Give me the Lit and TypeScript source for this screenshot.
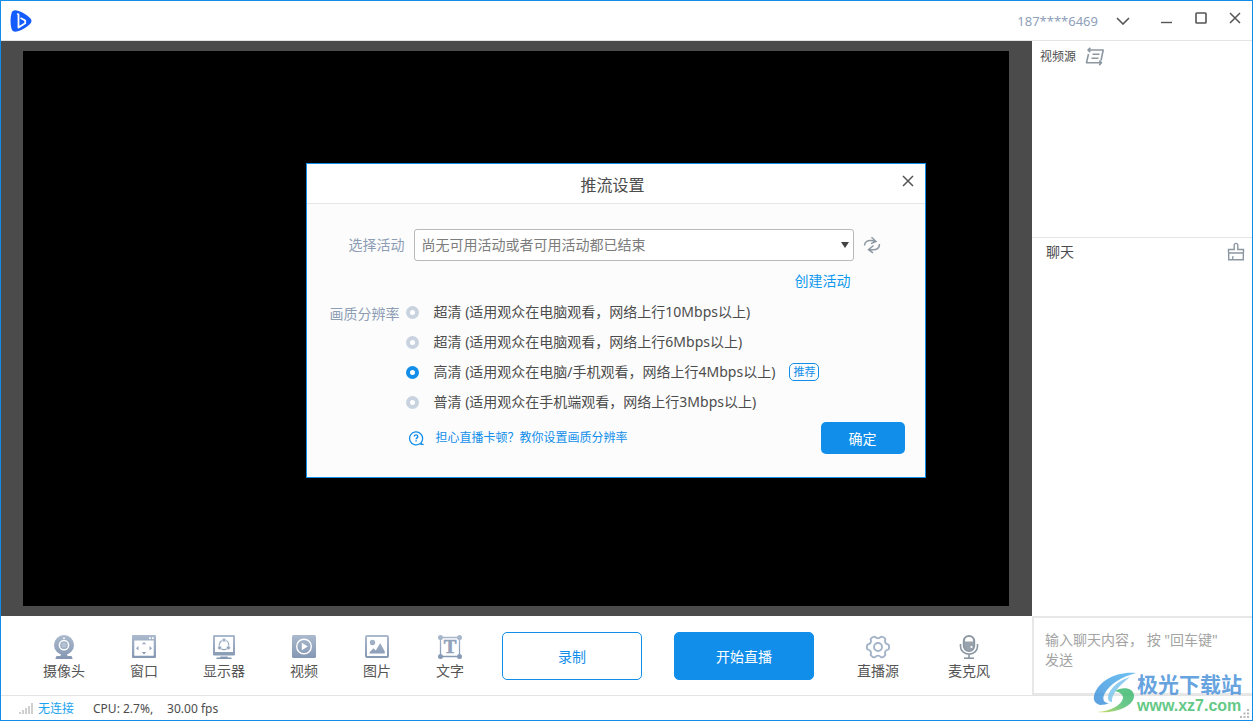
import { LitElement, html, css, svg } from "lit";
import { customElement, state } from "lit/decorators.js";

const steel = svg`<defs><linearGradient id="steel" x1="0" y1="0" x2="0" y2="24" gradientUnits="userSpaceOnUse">
  <stop offset="0" stop-color="#abbacd"/><stop offset="1" stop-color="#8396b2"/></linearGradient></defs>`;

/** Outline of a six-lobed gear, centred on 12,12. */
function gearPath(): string {
  const at = (deg: number, r: number) => {
    const a = (deg * Math.PI) / 180;
    return `${(12 + r * Math.cos(a)).toFixed(2)} ${(12 + r * Math.sin(a)).toFixed(2)}`;
  };
  let d = `M${at(-13, 10.8)}`;
  for (let a = 0; a < 360; a += 60) {
    d += `Q${at(a, 11.8)} ${at(a + 13, 10.8)}Q${at(a + 30, 6.9)} ${at(a + 47, 10.8)}`;
  }
  return d + "Z";
}

const icons: Record<string, unknown> = {
  camera: svg`${steel}
    <circle cx="12" cy="10" r="10" fill="url(#steel)"/>
    <path d="M9 19h6l.6 2H19.500l1.200 3H3.300l1.200-3H8.400z" fill="url(#steel)"/>
    <circle cx="12" cy="10.200" r="4.600" fill="none" stroke="#fff" stroke-width="1.500"/>
    <circle cx="12" cy="10.200" r="2.600" fill="#b4c1d2"/>
    <circle cx="12" cy="3.200" r=".9" fill="#fff"/>`,
  window: svg`${steel}
    <path fill="url(#steel)" fill-rule="evenodd" d="M1 0h22a1 1 0 0 1 1 1v21a1 1 0 0 1-1 1H1a1 1 0 0 1-1-1V1a1 1 0 0 1 1-1zM2.300 5.500v15.200h19.400V5.500z"/>
    <path fill="#fff" d="M17 2.200h1.700v1.700H17zM20 2.200h1.700v1.700H20z"/>
    <path fill="url(#steel)" d="M12 7l2.300 2.300H9.700zM12 19.400l2.300-2.300H9.700zM4 13.200l2.500-2.300v4.600zM20 13.200l-2.500-2.300v4.600z"/>`,
  monitor: svg`${steel}
    <path fill="url(#steel)" fill-rule="evenodd" d="M2 0h20a1 1 0 0 1 1 1v18.500a1 1 0 0 1-1 1H2a1 1 0 0 1-1-1V1a1 1 0 0 1 1-1zM3 2v15h18V2z"/>
    <path fill="url(#steel)" d="M8.500 21.500h7l.5 1h3.500V24h-15v-1.500H8z"/>
    <circle cx="12" cy="9.900" r="4.700" fill="none" stroke="url(#steel)" stroke-width="1.300"/>
    <g fill="url(#steel)" stroke="#fff" stroke-width=".6"><circle cx="12" cy="5" r="2"/><circle cx="7.600" cy="12.800" r="2"/><circle cx="16.400" cy="12.800" r="2"/></g>`,
  video: svg`${steel}
    <rect width="24" height="23" rx="1.500" fill="url(#steel)"/>
    <circle cx="12" cy="11.500" r="7.300" fill="none" stroke="#fff" stroke-width="1.400"/>
    <path fill="#fff" d="M9.800 7.700l6 3.800-6 3.800z"/>`,
  picture: svg`${steel}
    <rect x="1" y="1" width="22" height="21" rx="1" fill="none" stroke="url(#steel)" stroke-width="2"/>
    <circle cx="7.500" cy="7.500" r="2.700" fill="url(#steel)"/>
    <path fill="url(#steel)" d="M4.500 18.500v-1.200l4-4 2.300 2.200L15.200 8l4.600 8.500v2z"/>`,
  text: svg`${steel}
    <path d="M2.500 2.500h19v19h-19z" fill="none" stroke="url(#steel)" stroke-width="1.300"/>
    <g fill="url(#steel)"><circle cx="2.500" cy="2.500" r="2.500"/><circle cx="21.500" cy="2.500" r="2.500"/><circle cx="2.500" cy="21.500" r="2.500"/><circle cx="21.500" cy="21.500" r="2.500"/></g>
    <text x="12" y="18" text-anchor="middle" font-family="Liberation Serif, serif" font-weight="700" font-size="19" fill="#91a2bb" stroke="#91a2bb" stroke-width=".6">T</text>`,
  gear: svg`<path d="${gearPath()}" fill="none" stroke="#a3b3c8" stroke-width="1.900" stroke-linejoin="round"/>
    <circle cx="12" cy="12" r="4" fill="none" stroke="#a3b3c8" stroke-width="1.900"/>`,
  mic: svg`<rect x="6.500" y=".7" width="11" height="15.600" rx="5.500" fill="#98a2ad" stroke="#8b96a3" stroke-width="1.400"/>
    <path fill="#fff" d="M8 6.500V6a4 4 0 0 1 8 0v.5z"/><circle cx="14.500" cy="12" r="1.100" fill="#fff"/>
    <path d="M3.500 9v2.500a8.500 7.600 0 0 0 17 0V9M12 19v4" fill="none" stroke="#8b96a3" stroke-width="1.600"/>
    <path d="M7 23.200h10" stroke="#8b96a3" stroke-width="1.600"/>`,
};

const icon = (name: string) => html`<svg width="24" height="24" viewBox="0 0 24 24" aria-hidden="true">${icons[name]}</svg>`;

const sources = [
  { icon: "camera", label: "摄像头" },
  { icon: "window", label: "窗口" },
  { icon: "monitor", label: "显示器" },
  { icon: "video", label: "视频" },
  { icon: "picture", label: "图片" },
  { icon: "text", label: "文字" },
];

const inputs = [
  { icon: "gear", label: "直播源" },
  { icon: "mic", label: "麦克风" },
];

const qualities = [
  { id: "q10", label: "超清 (适用观众在电脑观看，网络上行10Mbps以上)", recommended: false },
  { id: "q6", label: "超清 (适用观众在电脑观看，网络上行6Mbps以上)", recommended: false },
  { id: "q4", label: "高清 (适用观众在电脑/手机观看，网络上行4Mbps以上)", recommended: true },
  { id: "q3", label: "普清 (适用观众在手机端观看，网络上行3Mbps以上)", recommended: false },
];

const base = css`
  * { box-sizing: border-box; }
  button { font: inherit; color: inherit; border: 0; padding: 0; background: none; cursor: pointer; }
  a { text-decoration: none; }
  svg { display: block; }
`;

@customElement("stream-settings")
export class StreamSettings extends LitElement {
  @state() private quality = "q4";

  static styles = [base, css`
    :host { display: block; background: #fcfcfc; border: 1px solid #118eea; color: #4c4c4c; font-size: 14px; line-height: 20px; }
    .head { position: relative; background: #fff; border-bottom: 1px solid #e4e6e8; height: 40px; display: grid; place-items: center; padding: 2px 6px 0 0; }
    h2 { margin: 0; font-size: 16px; line-height: 24px; font-weight: 400; color: #4c4c4c; }
    .close { position: absolute; right: 11px; top: 11px; color: #555; }
    form { padding: 25px 20px 23px 0; }
    .row { display: flex; align-items: center; gap: 9px; padding-left: 42px; }
    .caption { color: #8d9db4; white-space: nowrap; }
    .picker { position: relative; flex: 1; max-width: 440px; }
    select { appearance: none; width: 100%; height: 32px; display: block; padding: 0 24px 0 7px; border: 1px solid #b9b9b9; border-radius: 3px; background: #fff; color: #7c7c7c; font: inherit; }
    .caret { position: absolute; right: 4px; top: 12px; pointer-events: none; }
    .create { display: flex; justify-content: flex-end; margin-top: 10px; padding-right: 54px; }
    .create a { color: #0d99ee; }
    .quality { display: flex; gap: 6px; padding: 6px 0 0 23px; margin: 0; }
    .quality .caption { line-height: 34px; }
    .options { flex: 1; }
    .option { display: flex; align-items: center; height: 30px; }
    .option label { padding-left: 15px; }
    input { appearance: none; margin: 0; width: 13px; height: 13px; border-radius: 50%; border: 4px solid #c9d3df; background: #fff; }
    input:checked { border-color: #118eea; }
    .badge { margin-left: 14px; border: 1px solid #118eea; border-radius: 5px; color: #118eea; font-size: 11px; line-height: 16px; padding: 0 3px; }
    .foot { display: flex; justify-content: space-between; align-items: center; margin-top: 5px; padding-left: 101px; }
    .help { display: flex; align-items: center; gap: 12px; color: #118eea; font-size: 12px; }
    .ok { width: 84px; height: 32px; padding-top: 2px; border-radius: 5px; background: #118eea; color: #fff; }
  `];

  render() {
    return html`
      <div class="head">
        <h2>推流设置</h2>
        <button class="close" aria-label="关闭"><svg width="12" height="12" viewBox="0 0 12 12"><path d="M1 1l10 10M11 1L1 11" stroke="currentColor" stroke-width="1.500"/></svg></button>
      </div>
      <form @submit=${(e: Event) => e.preventDefault()}>
        <div class="row">
          <label class="caption" for="activity">选择活动</label>
          <div class="picker">
            <select id="activity"><option>尚无可用活动或者可用活动都已结束</option></select>
            <svg class="caret" width="10" height="8" viewBox="0 0 10 8"><path d="M1 1h8L5 7z" fill="#444"/></svg>
          </div>
          <button type="button" aria-label="刷新"><svg width="18" height="18" viewBox="0 0 18 18" fill="none" stroke="#8e98a3" stroke-width="1.500">
            <path d="M1.500 9.500C1.500 5.500 5 4 8.500 4.500L13 5.500M8.500 1.200l4.500 4.200-5 2.200"/>
            <path d="M16.500 8c0 4-3 5.800-6.500 5.800H5.500M10.500 9.500l-5 4.200 4.500 3.200"/></svg></button>
        </div>
        <div class="create"><a href="#">创建活动</a></div>
        <div class="quality" role="radiogroup" aria-labelledby="quality-caption">
          <span class="caption" id="quality-caption">画质分辨率</span>
          <div class="options">
            ${qualities.map((q) => html`<div class="option">
              <input type="radio" name="quality" id=${q.id} .checked=${this.quality === q.id} @change=${() => (this.quality = q.id)}>
              <label for=${q.id}>${q.label}</label>
              ${q.recommended ? html`<span class="badge">推荐</span>` : ""}
            </div>`)}
          </div>
        </div>
        <div class="foot">
          <a class="help" href="#"><svg width="16" height="16" viewBox="0 0 16 16" fill="none" stroke="#118eea" stroke-width="1.300">
            <path d="M12 13.600A6.500 6.500 0 1 1 14.500 9.500c-.2 1.500-.9 2.600-1.500 3.200 0 .9.600 1.400 1.400 1.600-1 .3-1.800 0-2.400-.7"/>
            <path d="M6.300 6.500c0-2.200 3.500-2.200 3.500 0 0 1.300-1.700 1.400-1.700 2.800M8.100 10.300v1.300" stroke-width="1.400"/></svg>担心直播卡顿？教你设置画质分辨率</a>
          <button class="ok">确定</button>
        </div>
      </form>`;
  }
}

@customElement("app-root")
export class AppRoot extends LitElement {
  static styles = [base, css`
    :host {
      position: relative; display: grid; height: 100vh; box-sizing: border-box; overflow: hidden;
      grid-template: auto minmax(0, 1fr) auto auto / minmax(0, 1fr) 220px;
      grid-template-areas: "title title" "stage side" "tools chat" "status status";
      border: 1px solid #118eea; background: #fff; color: #4c4c4c;
      font: 14px/20px "Noto Sans", "Noto Sans CJK SC", sans-serif;
    }
    header { grid-area: title; display: flex; align-items: center; height: 40px; padding-left: 9px; border-bottom: 1px solid #e4e4e4; }
    .account { margin-left: auto; display: flex; align-items: center; color: #8ea0ba; font-size: 13px; }
    .account button { width: 24px; height: 24px; display: grid; place-items: center; margin-left: 13px; color: #555; }
    .controls { display: flex; align-self: stretch; margin-left: 15px; color: #555; }
    .controls button { width: 34px; height: 34px; display: grid; place-items: center; }
    .stage { grid-area: stage; background: #4b4b4b; padding: 10px 23px 10px 22px; display: grid; }
    .preview { background: #000; }
    aside { grid-area: side; display: grid; grid-template-rows: 197px 1fr; }
    .panel { display: flex; align-items: flex-start; }
    .panel h3 { margin: 0; font-weight: 400; }
    .feeds { padding: 6px 8px; gap: 9px; border-bottom: 1px solid #e4e4e4; }
    .feeds h3 { font-size: 12px; }
    .talk { padding: 4px 7px 0 14px; justify-content: space-between; }
    .talk h3 { font-size: 14px; }
    .tools { grid-area: tools; display: flex; align-items: center; height: 79px; padding-left: 42px; }
    .group { display: flex; }
    .sources { gap: 45px; }
    .actions { gap: 32px; margin: 0 43px 0 38px; }
    .inputs { gap: 49px; }
    .tool { display: grid; justify-items: center; gap: 2px; padding-top: 4px; white-space: nowrap; color: #555; }
    .action { width: 140px; height: 48px; padding-top: 2px; border-radius: 5px; border: 1px solid #118eea; color: #118eea; }
    .primary { background: #118eea; color: #fff; }
    .chat { grid-area: chat; display: grid; }
    textarea { width: 100%; height: 79px; resize: none; border: solid #e7e7e7; border-width: 2px 0 2px 2px; padding: 12px 20px 0 11px; font: inherit; color: #444; background: #fff; outline: 0; overflow: hidden; }
    textarea::placeholder { color: #a3a3a3; opacity: 1; }
    footer { grid-area: status; display: flex; align-items: center; height: 25px; padding: 1px 3px 0 18px; border-top: 1px solid #e4e4e4; font-size: 12px; }
    .link { color: #1aa3ee; margin: 0 19px 0 4px; }
    .fps { margin-left: 14px; }
    .grip { margin-left: auto; align-self: flex-end; margin-bottom: 2px; }
    .dialog { position: absolute; left: calc(50% - 321px); top: 162px; width: 620px; }
    .mark { position: absolute; right: 10px; bottom: 6px; display: flex; align-items: center; pointer-events: none; opacity: 0.85; }
    .mark-name { font-size: 21px; line-height: 26px; font-weight: 700; color: #4d93da; }
    .mark-site { font: 700 16px/17px "Liberation Sans", sans-serif; color: #4abf72; }
  `];

  private tool(t: { icon: string; label: string }) {
    return html`<button class="tool">${icon(t.icon)}<span>${t.label}</span></button>`;
  }

  render() {
    return html`
      <header>
        <svg width="22" height="22" viewBox="0 0 22 22" aria-hidden="true">
          <path fill="#155cff" d="M1.500 3.200C2.300.2 4.800-.3 8 .8c4.500 1.500 9 4 12 7.200 2 2 2 4 0 6-3 3.200-7.500 5.700-12 7.200-3.200 1-5.700.5-6.500-2.400C.2 14 .2 8 1.500 3.200z"/>
          <path fill="none" stroke="#fff" stroke-width="1.800" stroke-linejoin="round" d="M7.200 3.800l1.300.8v13l6.700-4.300V10.500L10.500 8"/>
        </svg>
        <div class="account">187****6469
          <button aria-label="账号菜单"><svg width="14" height="8" viewBox="0 0 14 8"><path d="M1 1l6 6L13 1" fill="none" stroke="currentColor" stroke-width="1.600"/></svg></button>
        </div>
        <div class="controls">
          <button aria-label="最小化"><svg width="12" height="12" viewBox="0 0 12 12"><path d="M0 10.500h11" stroke="currentColor" stroke-width="1.400"/></svg></button>
          <button aria-label="最大化"><svg width="12" height="12" viewBox="0 0 12 12"><rect x="1" y="1" width="10" height="10" rx=".8" fill="none" stroke="currentColor" stroke-width="1.600"/></svg></button>
          <button aria-label="关闭窗口"><svg width="12" height="12" viewBox="0 0 12 12"><path d="M1 1l10 10M11 1L1 11" stroke="currentColor" stroke-width="1.500"/></svg></button>
        </div>
      </header>
      <main class="stage"><div class="preview"></div></main>
      <aside>
        <section class="panel feeds">
          <h3>视频源</h3>
          <button aria-label="切换视频源"><svg width="20" height="20" viewBox="0 0 20 20" fill="none" stroke="#8d97a2" stroke-width="1.600" stroke-linejoin="round">
            <path d="M3 3h15.200l-2.200 10.500M5.300.8L3 3l2.300 2.200M3.500 7L1.500 15.800h15M14.200 13.500l2.300 2.300-2.300 2.300"/>
            <path d="M7.500 7.300h7M6.500 11.300h7"/></svg></button>
        </section>
        <section class="panel talk">
          <h3>聊天</h3>
          <button aria-label="清空聊天"><svg width="18" height="20" viewBox="0 0 18 20" fill="none" stroke="#8d97a2" stroke-width="1.400">
            <path d="M1.500 11V7.500h5.700V3.200a1.700 1.700 0 0 1 3.600 0v4.300h5.700V11M1 11h16M1.700 11v7M16.300 11v7M1 17.800h16M6 14.200l-.5 3.300" /></svg></button>
        </section>
      </aside>
      <nav class="tools">
        <div class="group sources">${sources.map((t) => this.tool(t))}</div>
        <div class="group actions">
          <button class="action">录制</button>
          <button class="action primary">开始直播</button>
        </div>
        <div class="group inputs">${inputs.map((t) => this.tool(t))}</div>
      </nav>
      <div class="chat"><textarea aria-label="聊天内容" placeholder='输入聊天内容， 按 "回车键" 发送'></textarea></div>
      <footer>
        <svg width="15" height="11" viewBox="0 0 15 11" fill="#cfcfcf" aria-hidden="true"><path d="M0 9h2v2H0zM3 7h2v4H3zM6 5h2v6H6zM9 3h2v8H9zM12 0h2v11h-2z"/></svg>
        <span class="link">无连接</span>
        <span>CPU: 2.7%,</span>
        <span class="fps">30.00 fps</span>
        <svg class="grip" width="9" height="9" viewBox="0 0 9 9" fill="#b9b9b9" aria-hidden="true"><path d="M7 0h2v2H7zM3.500 3.500h2v2h-2zM7 3.500h2v2H7zM0 7h2v2H0zM3.500 7h2v2h-2zM7 7h2v2H7z"/></svg>
      </footer>
      <stream-settings class="dialog" role="dialog" aria-label="推流设置"></stream-settings>
      <div class="mark">
        <svg width="44" height="42" viewBox="0 0 44 42" aria-hidden="true">
          <defs>
            <linearGradient id="sky" x1="0" y1="1" x2="1" y2="0"><stop offset="0" stop-color="#3f8fdb"/><stop offset="1" stop-color="#55b8f0"/></linearGradient>
            <linearGradient id="leaf" x1="0" y1="1" x2="1" y2="0"><stop offset="0" stop-color="#c6d94c"/><stop offset=".5" stop-color="#4fc077"/><stop offset="1" stop-color="#38b86f"/></linearGradient>
          </defs>
          <path fill="url(#sky)" d="M43 1C25-1 5 8 1 24c-1 5 2 8 6 9 4 0 7-1 9-2-6 0-7-5-4-10C17 12 28 5 43 1z"/>
          <path fill="#7cc6ee" d="M37 5C24 9 15 18 15 26c0 3 2 4 4 4-1-8 8-17 18-25z"/>
          <path fill="url(#leaf)" d="M22 19c8-5 19-3 19 5 0 10-18 18-37 16 14-1 25-7 26-14 0-4-4-6-8-7z"/>
        </svg>
        <div><div class="mark-name">极光下载站</div><div class="mark-site">www.xz7.com</div></div>
      </div>`;
  }
}
